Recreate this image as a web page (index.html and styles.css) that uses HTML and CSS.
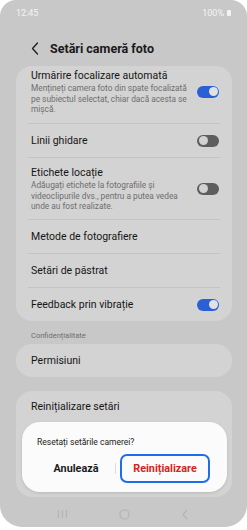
FILE: index.html
```html
<!DOCTYPE html>
<html lang="ro">
<head>
<meta charset="utf-8">
<title>Setări cameră foto</title>
<link rel="stylesheet" href="styles.css">
</head>
<body>
<div class="phone">
  <div class="status">
    <span>12:45</span>
    <span class="batt">100%<i class="batt-icon"></i></span>
  </div>
  <div class="header">
    <svg class="back" width="8" height="13" viewBox="0 0 8 13"><path d="M6.5 1 L1.5 6.5 L6.5 12" fill="none" stroke="#1c1c1c" stroke-width="1.3" stroke-linecap="round" stroke-linejoin="round"/></svg>
    <h1 class="title">Setări cameră foto</h1>
  </div>

  <div class="card">
    <div class="item first">
      <div class="text">
        <div class="label">Urmărire focalizare automată</div>
        <div class="sub">Mențineți camera foto din spate focalizată pe subiectul selectat, chiar dacă acesta se mișcă.</div>
      </div>
      <span class="toggle on"></span>
    </div>
    <div class="divider"></div>
    <div class="item row">
      <div class="label">Linii ghidare</div>
      <span class="toggle"></span>
    </div>
    <div class="divider"></div>
    <div class="item multi">
      <div class="text">
        <div class="label">Etichete locație</div>
        <div class="sub">Adăugați etichete la fotografiile și videoclipurile dvs., pentru a putea vedea unde au fost realizate.</div>
      </div>
      <span class="toggle"></span>
    </div>
    <div class="divider"></div>
    <div class="item row"><div class="label">Metode de fotografiere</div></div>
    <div class="divider"></div>
    <div class="item row"><div class="label">Setări de păstrat</div></div>
    <div class="divider"></div>
    <div class="item row">
      <div class="label">Feedback prin vibrație</div>
      <span class="toggle on"></span>
    </div>
  </div>

  <div class="section">Confidențialitate</div>
  <div class="card">
    <div class="item row"><div class="label">Permisiuni</div></div>
  </div>

  <div class="card last">
    <div class="item row"><div class="label">Reinițializare setări</div></div>
  </div>

  <div class="navbar">
    <svg width="11" height="10" viewBox="0 0 11 10"><path d="M1.5 1v8M5.5 1v8M9.5 1v8" stroke="#b4b4b4" stroke-width="1.2"/></svg>
    <svg width="11" height="11" viewBox="0 0 11 11"><rect x="1" y="1" width="9" height="9" rx="4" fill="none" stroke="#b4b4b4" stroke-width="1.2"/></svg>
    <svg width="8" height="11" viewBox="0 0 8 11"><path d="M6 1 L2 5.5 L6 10" fill="none" stroke="#b4b4b4" stroke-width="1.2"/></svg>
  </div>

  <div class="dialog">
    <div class="dialog-text">Resetați setările camerei?</div>
    <div class="dialog-buttons">
      <button class="btn cancel">Anulează</button>
      <span class="sep"></span>
      <button class="btn reset">Reinițializare</button>
    </div>
  </div>
</div>
</body>
</html>
```

FILE: styles.css
```css
* { box-sizing: border-box; }
html, body { margin: 0; padding: 0; background: #ffffff; }
body { font-family: Roboto, "Noto Sans", "Liberation Sans", sans-serif; }

.phone {
  position: relative;
  width: 247px;
  height: 527px;
  background: #c8c8c8;
  border-radius: 16px 16px 22px 22px;
  overflow: hidden;
  display: flex;
  flex-direction: column;
}

.status {
  height: 26px;
  padding: 0 16px 0 16px;
  display: flex;
  align-items: center;
  justify-content: space-between;
  font-size: 9px;
  color: #f4f4f4;
}
.batt { display: flex; align-items: center; gap: 3px; }
.batt-icon {
  display: inline-block;
  width: 4px;
  height: 6px;
  background: #f4f4f4;
  border-radius: 1px;
}

.header {
  height: 40px;
  padding: 4px 0 0 31px;
  display: flex;
  align-items: center;
  gap: 11px;
}
.title {
  margin: 0;
  font-size: 12.5px;
  font-weight: 700;
  color: #1a1a1a;
}

.card {
  margin: 0 15px 0 16px;
  background: #d3d3d3;
  border-radius: 16px;
}

.item {
  display: flex;
  align-items: center;
  justify-content: space-between;
  padding: 0 13px 0 15px;
}
.item.first { padding-top: 3px; padding-bottom: 8.5px; }
.item.multi { padding-top: 8px; padding-bottom: 7.5px; }
.item.row { height: 33px; }

.text { width: 162px; }
.label {
  font-size: 10.5px;
  line-height: 14px;
  color: #161616;
}
.sub {
  font-size: 8.3px;
  line-height: 10.5px;
  color: #6e6e6e;
}

.divider {
  height: 1px;
  margin: 0 12px;
  background: #c3c3c3;
}

.toggle {
  position: relative;
  flex: none;
  width: 22px;
  height: 12px;
  border-radius: 6px;
  background: #5e5e5e;
}
.toggle::after {
  content: "";
  position: absolute;
  top: 1.5px;
  left: 1.5px;
  width: 9px;
  height: 9px;
  border-radius: 50%;
  background: #d2d2d2;
}
.toggle.on { background: #2a5fd6; }
.toggle.on::after { left: auto; right: 1.5px; background: #e2e2e2; }

.section {
  padding: 11px 0 0 31px;
  height: 23px;
  font-size: 7.5px;
  line-height: 8px;
  color: #6e6e6e;
}

.card.last {
  margin-top: 14px;
  height: 106px;
}
.card.last .item.row { height: 32px; }

.navbar {
  margin-top: auto;
  height: 30px;
  padding: 4px 58px 0 57px;
  display: flex;
  align-items: center;
  justify-content: space-between;
}

.dialog {
  position: absolute;
  left: 22px;
  top: 422px;
  width: 205px;
  height: 70px;
  background: #fbfbfb;
  border-radius: 18px;
  box-shadow: 0 1px 3px rgba(0,0,0,0.12);
  padding: 14px 0 0 15px;
}
.dialog-text {
  font-size: 8.5px;
  line-height: 12px;
  color: #222;
}
.dialog-buttons {
  display: flex;
  align-items: center;
  margin-top: 6px;
  height: 29px;
}
.btn {
  font-family: inherit;
  font-weight: 700;
  font-size: 10.8px;
  background: none;
  border: none;
  padding: 0;
}
.cancel {
  width: 78px;
  color: #1a1a1a;
  text-align: center;
}
.sep {
  width: 1px;
  height: 11px;
  background: #dcdcdc;
}
.reset {
  margin-left: 4px;
  width: 90px;
  height: 29px;
  border: 2px solid #1d6ee8;
  border-radius: 7px;
  color: #d3241c;
}
```
